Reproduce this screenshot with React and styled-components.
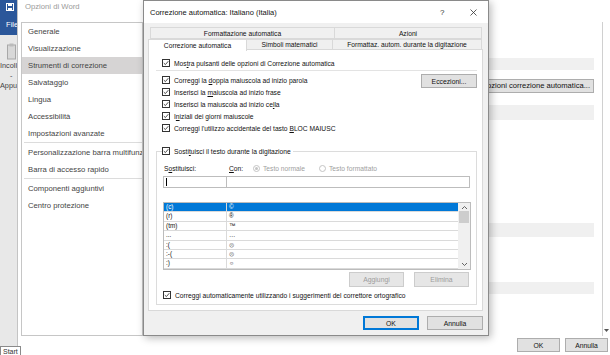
import styled, { createGlobalStyle } from "styled-components";

const GlobalStyle = createGlobalStyle`
  html, body { margin: 0; padding: 0; }
  body {
    width: 610px;
    height: 355px;
    overflow: hidden;
    background: #fff;
    font-family: "Liberation Sans", Arial, sans-serif;
  }
`;

const Page = styled.div`
  position: relative;
  display: flex;
  width: 610px;
  height: 355px;
  overflow: hidden;
  background: #fff;
`;

/* ---------- Word ribbon strip on the far left ---------- */
const Ribbon = styled.div`
  width: 17px;
  height: 346px;
  flex-shrink: 0;
  display: flex;
  flex-direction: column;
  background: #e8e8e8;
  border-right: 1px solid #c4c4c4;
  overflow: hidden;
`;
const FileTab = styled.div`
  height: 35px;
  background: #2b579a;
  color: #fff;
  display: flex;
  flex-direction: column;
  padding: 3px 0 0 6px;
  box-sizing: border-box;
  font-size: 7.6px;
  gap: 9px;
`;
const RibbonBody = styled.div`
  display: flex;
  flex-direction: column;
  align-items: flex-start;
  padding-top: 8px;
  color: #444;
  font-size: 7.3px;
  line-height: 10px;
  white-space: nowrap;
`;
const RibbonIcon = styled.div`
  padding-left: 7px;
  height: 18px;
`;

/* ---------- Opzioni di Word window ---------- */
const OptionsWindow = styled.div`
  flex: 1;
  display: flex;
  flex-direction: column;
  min-width: 0;
`;
const WinTitle = styled.div`
  height: 22px;
  padding: 2px 0 0 7px;
  box-sizing: border-box;
  font-size: 7.7px;
  line-height: 10px;
  color: #9a9a9a;
`;
const WinBody = styled.div`
  display: flex;
  height: 314px;
`;
const Nav = styled.div`
  width: 122px;
  margin-left: 3px;
  flex-shrink: 0;
  border: 1px solid #c6c6c6;
  box-sizing: border-box;
  display: flex;
  flex-direction: column;
`;
const NavItem = styled.div`
  height: 17px;
  line-height: 17px;
  padding-left: 6px;
  font-size: 7.7px;
  color: #444;
  white-space: nowrap;
  overflow: hidden;
  background: ${(p) => (p.$active ? "#d6d4d4" : "transparent")};
`;
const NavSep = styled.div`
  height: 1px;
  margin: 0 0 1px 2px;
  background: #dcdcdc;
`;
const Content = styled.div`
  flex: 1;
  display: flex;
  flex-direction: column;
  padding: 36px 8px 0 0;
`;
const Band = styled.div`
  height: ${(p) => p.$h}px;
  margin-bottom: ${(p) => p.$mb}px;
  background: #f0f0f0;
`;
const WideButton = styled.div`
  align-self: flex-end;
  height: 14px;
  width: 260px;
  box-sizing: border-box;
  border: 1px solid #adadad;
  background: #e1e1e1;
  font-size: 7.6px;
  line-height: 12px;
  text-align: right;
  padding-right: 3px;
  color: #111;
  white-space: nowrap;
  margin-bottom: ${(p) => p.$mb}px;
`;
const ScrollBar = styled.div`
  width: 8px;
  flex-shrink: 0;
  border-left: 1px solid #d0d0d0;
  display: flex;
  flex-direction: column;
  justify-content: flex-end;
  align-items: center;
  padding-bottom: 3px;
  box-sizing: border-box;
`;
const WinFooter = styled.div`
  flex: 1;
  display: flex;
  justify-content: flex-end;
  align-items: flex-start;
  gap: 5px;
  padding: 2px 2px 0 0;
`;

const Button = styled.div`
  width: ${(p) => p.$w}px;
  height: ${(p) => p.$h || 14}px;
  box-sizing: border-box;
  background: #e1e1e1;
  border: 1px solid ${(p) => (p.$default ? "#0078d7" : "#adadad")};
  ${(p) => p.$default && "box-shadow: inset 0 0 0 1px #0078d7;"}
  color: ${(p) => (p.$disabled ? "#9c9c9c" : "#111")};
  ${(p) => p.$disabled && "border-color: #cccccc; background: #e6e6e6;"}
  font-size: 6.8px;
  display: flex;
  align-items: center;
  justify-content: center;
`;

/* ---------- Correzione automatica dialog ---------- */
const Dialog = styled.div`
  position: absolute;
  left: 143px;
  top: 0;
  width: 346px;
  height: 336px;
  box-sizing: border-box;
  border: 1px solid #8a8a8a;
  background: #f0f0f0;
  box-shadow: 2px 2px 8px rgba(0, 0, 0, 0.28);
  display: flex;
  flex-direction: column;
  font-size: 6.7px;
  color: #111;
`;
const DialogTitle = styled.div`
  height: 22px;
  flex-shrink: 0;
  background: #fff;
  display: flex;
  align-items: center;
  padding: 0 11px 0 6px;
  font-size: 7.5px;
`;
const TitleText = styled.div`
  flex: 1;
`;
const TitleHelp = styled.div`
  width: 30px;
  font-size: 8px;
  color: #333;
`;
const DialogBody = styled.div`
  flex: 1;
  display: flex;
  flex-direction: column;
  padding: 4px 5px 0 4px;
`;
const TabRow = styled.div`
  display: flex;
  height: ${(p) => p.$h}px;
  padding-left: ${(p) => p.$inset || 0}px;
`;
const Tab = styled.div`
  width: ${(p) => p.$w}px;
  box-sizing: border-box;
  border: 1px solid #d9d9d9;
  border-bottom: ${(p) => (p.$active ? "none" : "1px solid #d9d9d9")};
  border-left: ${(p) => (p.$first ? "1px solid #d9d9d9" : "none")};
  background: ${(p) => (p.$active ? "#fff" : "#f0f0f0")};
  display: flex;
  align-items: center;
  justify-content: center;
  white-space: nowrap;
  position: relative;
  z-index: ${(p) => (p.$active ? 1 : 0)};
  height: ${(p) => (p.$active ? "calc(100% + 1px)" : "100%")};
`;
const Panel = styled.div`
  height: 262px;
  box-sizing: border-box;
  border: 1px solid #d9d9d9;
  margin-top: -1px;
  background: #fff;
  display: flex;
  flex-direction: column;
  padding: 7px 5px 0 7px;
`;
const CheckRow = styled.div`
  display: flex;
  align-items: center;
  height: 12px;
  gap: 4px;
  padding-left: ${(p) => p.$pad || 0}px;
  margin-top: ${(p) => p.$mt || 0}px;
  white-space: nowrap;
`;
const Divider = styled.div`
  height: 1px;
  background: #e3e3e3;
  margin: 1px 0 3px 0;
`;
const OptionBlock = styled.div`
  display: flex;
  justify-content: space-between;
  padding-left: 6px;
`;
const OptionList = styled.div`
  display: flex;
  flex-direction: column;
`;
const BoxWrap = styled.span`
  width: 8px;
  height: 8px;
  box-sizing: border-box;
  border: 1px solid #333;
  background: #fff;
  display: inline-flex;
  flex-shrink: 0;
`;
const Group = styled.fieldset`
  margin: 11px 0 0 0;
  padding: 0 6px;
  height: 160px;
  box-sizing: border-box;
  border: 1px solid #dcdcdc;
  min-width: 0;
`;
const Legend = styled.legend`
  padding: 0 2px 0 0;
  margin-left: -1px;
`;
const LabelRow = styled.div`
  display: flex;
  align-items: center;
  height: 12px;
  margin-top: 5px;
`;
const FieldLabel = styled.div`
  width: ${(p) => p.$w}px;
  padding-left: 1px;
`;
const Radio = styled.span`
  width: 7px;
  height: 7px;
  border-radius: 50%;
  border: 1px solid #c4c4c4;
  box-sizing: border-box;
  display: inline-flex;
  align-items: center;
  justify-content: center;
  margin: 0 3px 0 0;
  &::after {
    content: "";
    width: 3px;
    height: 3px;
    border-radius: 50%;
    background: ${(p) => (p.$on ? "#c4c4c4" : "transparent")};
  }
`;
const RadioLabel = styled.span`
  color: #a0a0a0;
  margin-right: 14px;
  display: inline-flex;
  align-items: center;
`;
const InputRow = styled.div`
  display: flex;
  margin-top: 2px;
`;
const Input = styled.div`
  height: 12px;
  box-sizing: border-box;
  border: 1px solid #bdbdbd;
  margin-left: ${(p) => (p.$joined ? "-1px" : 0)};
  width: ${(p) => p.$w}px;
  background: #fff;
  display: flex;
  align-items: center;
  padding-left: 2px;
`;
const Caret = styled.span`
  width: 1px;
  height: 8px;
  background: #000;
`;
const ListBox = styled.div`
  margin-top: 14px;
  width: 308px;
  height: 68px;
  box-sizing: border-box;
  border: 1px solid #bcbcbc;
  display: flex;
  overflow: hidden;
`;
const ListRows = styled.div`
  flex: 1;
  display: flex;
  flex-direction: column;
`;
const ListRow = styled.div`
  display: flex;
  height: 9.4px;
  flex-shrink: 0;
  box-sizing: border-box;
  border-bottom: 1px solid #dadada;
  background: ${(p) => (p.$sel ? "#0078d7" : "#fff")};
  color: ${(p) => (p.$sel ? "#fff" : "#111")};
  font-size: 6.4px;
  line-height: 8.4px;
`;
const Cell = styled.div`
  width: ${(p) => (p.$w ? `${p.$w}px` : "auto")};
  flex: ${(p) => (p.$w ? "none" : 1)};
  box-sizing: border-box;
  border-right: ${(p) => (p.$w ? "1px solid #dadada" : "none")};
  padding-left: 2px;
  overflow: hidden;
  font-size: ${(p) => (p.$small ? "5px" : "inherit")};
`;
const ListScroll = styled.div`
  width: 12px;
  background: #f0f0f0;
  display: flex;
  flex-direction: column;
  align-items: center;
  padding: 2px 0;
  box-sizing: border-box;
`;
const Thumb = styled.div`
  width: 10px;
  height: 12px;
  background: #cdcdcd;
  margin-top: 1px;
  margin-bottom: auto;
`;
const ActionRow = styled.div`
  display: flex;
  justify-content: flex-end;
  gap: 10px;
  width: 306px;
  margin-top: 2px;
`;
const DialogFooter = styled.div`
  display: flex;
  justify-content: flex-end;
  gap: 8px;
  padding: 5px 0 0 0;
`;

const StartTip = styled.div`
  position: absolute;
  left: 0;
  top: 346px;
  height: 10px;
  padding: 0 2px;
  border: 1px solid #8a8a8a;
  background: #fff;
  font-size: 7px;
  line-height: 9px;
  color: #333;
`;

function Check({ checked = true }) {
  return (
    <BoxWrap>
      {checked && (
        <svg width="6" height="6" viewBox="0 0 6 6">
          <path d="M0.8 3.1 L2.4 4.6 L5.3 1.2" fill="none" stroke="#222" strokeWidth="0.8" />
        </svg>
      )}
    </BoxWrap>
  );
}

function Chevron({ up }) {
  return (
    <svg width="7" height="5" viewBox="0 0 7 5">
      <path d={up ? "M1 4 L3.5 1.5 L6 4" : "M1 1 L3.5 3.5 L6 1"} fill="none" stroke="#555" strokeWidth="0.9" />
    </svg>
  );
}

const navItems = [
  "Generale",
  "Visualizzazione",
  "Strumenti di correzione",
  "Salvataggio",
  "Lingua",
  "Accessibilità",
  "Impostazioni avanzate",
  "-",
  "Personalizzazione barra multifunzione",
  "Barra di accesso rapido",
  "-",
  "Componenti aggiuntivi",
  "Centro protezione",
];

// symbols of the last rows are Wingdings faces, drawn very small in the list
const entries = [
  ["(c)", "©"],
  ["(r)", "®"],
  ["(tm)", "™"],
  ["...", "…"],
  [":(", "☹", true],
  [":-(", "☹", true],
  [":)", "☺", true],
];

export default function App() {
  return (
    <Page>
      <GlobalStyle />
      <Ribbon>
        <FileTab>
          <svg width="8" height="8" viewBox="0 0 8 8">
            <rect x="0.5" y="0.5" width="7" height="7" fill="none" stroke="#fff" />
            <rect x="2" y="0.5" width="4" height="2.5" fill="#fff" />
            <rect x="2" y="5" width="4" height="2.5" fill="#fff" />
          </svg>
          <span>File</span>
        </FileTab>
        <RibbonBody>
          <RibbonIcon>
            <svg width="9" height="17" viewBox="0 0 9 17">
              <rect x="0.5" y="2" width="8" height="14" fill="#d8d8d8" stroke="#a8a8a8" />
              <rect x="2.5" y="0.5" width="4" height="3" fill="#bbb" />
            </svg>
          </RibbonIcon>
          <span>Incolla</span>
          <span style={{ paddingLeft: 10 }}>-</span>
          <span>Appunti</span>
        </RibbonBody>
      </Ribbon>

      <OptionsWindow>
        <WinTitle>Opzioni di Word</WinTitle>
        <WinBody>
          <Nav>
            {navItems.map((item, index) =>
              item === "-" ? (
                <NavSep key={index} />
              ) : (
                <NavItem key={index} $active={item === "Strumenti di correzione"}>
                  {item}
                </NavItem>
              )
            )}
          </Nav>
          <Content>
            <Band $h={12} $mb={9} />
            <WideButton $mb={12}>Opzioni correzione automatica...</WideButton>
            <Band $h={15} $mb={103} />
            <Band $h={14} $mb={45} />
            <Band $h={12} $mb={0} />
          </Content>
          <ScrollBar>
            <svg width="5" height="4" viewBox="0 0 5 4">
              <path d="M0 0 L5 0 L2.5 3 Z" fill="#555" />
            </svg>
          </ScrollBar>
        </WinBody>
        <WinFooter>
          <Button $w={43}>OK</Button>
          <Button $w={43}>Annulla</Button>
        </WinFooter>
      </OptionsWindow>

      <Dialog>
        <DialogTitle>
          <TitleText>Correzione automatica: Italiano (Italia)</TitleText>
          <TitleHelp>?</TitleHelp>
          <svg width="7" height="7" viewBox="0 0 7 7">
            <path d="M0.5 0.5 L6.5 6.5 M6.5 0.5 L0.5 6.5" stroke="#333" strokeWidth="0.8" />
          </svg>
        </DialogTitle>
        <DialogBody>
          <TabRow $h={12} $inset={2}>
            <Tab $w={185} $first>Formattazione automatica</Tab>
            <Tab $w={147}>Azioni</Tab>
          </TabRow>
          <TabRow $h={11}>
            <Tab $w={99} $first $active>Correzione automatica</Tab>
            <Tab $w={86}>Simboli matematici</Tab>
            <Tab $w={149}>Formattaz. autom. durante la digitazione</Tab>
          </TabRow>
          <Panel>
            <CheckRow $pad={6}>
              <Check />
              <span>
                Mos<u>t</u>ra pulsanti delle opzioni di Correzione automatica
              </span>
            </CheckRow>
            <Divider />
            <OptionBlock>
              <OptionList>
                <CheckRow>
                  <Check />
                  <span>
                    Correggi la <u>d</u>oppia maiuscola ad inizio parola
                  </span>
                </CheckRow>
                <CheckRow>
                  <Check />
                  <span>
                    Inserisci la <u>m</u>aiuscola ad inizio frase
                  </span>
                </CheckRow>
                <CheckRow>
                  <Check />
                  <span>
                    Inserisci la maiuscola ad inizio ce<u>l</u>la
                  </span>
                </CheckRow>
                <CheckRow>
                  <Check />
                  <span>
                    I<u>n</u>iziali dei giorni maiuscole
                  </span>
                </CheckRow>
                <CheckRow>
                  <Check />
                  <span>
                    Correggi l'utilizzo accidentale del tasto <u>B</u>LOC MAIUSC
                  </span>
                </CheckRow>
              </OptionList>
              <Button $w={56} $h={14}>
                Eccezioni...
              </Button>
            </OptionBlock>

            <Group>
              <Legend>
                <CheckRow>
                  <Check />
                  <span>
                    Sosti<u>t</u>uisci il testo durante la digitazione
                  </span>
                </CheckRow>
              </Legend>
              <LabelRow>
                <FieldLabel $w={64}>
                  S<u>o</u>stituisci:
                </FieldLabel>
                <FieldLabel $w={24}>
                  <u>C</u>on:
                </FieldLabel>
                <RadioLabel>
                  <Radio $on />
                  Testo normale
                </RadioLabel>
                <RadioLabel>
                  <Radio />
                  Testo formattato
                </RadioLabel>
              </LabelRow>
              <InputRow>
                <Input $w={64}>
                  <Caret />
                </Input>
                <Input $w={246} $joined />
              </InputRow>
              <ListBox>
                <ListRows>
                  {entries.map(([from, to, small], index) => (
                    <ListRow key={index} $sel={index === 0}>
                      <Cell $w={63}>{from}</Cell>
                      <Cell $small={small}>{to}</Cell>
                    </ListRow>
                  ))}
                </ListRows>
                <ListScroll>
                  <Chevron up />
                  <Thumb />
                  <Chevron />
                </ListScroll>
              </ListBox>
              <ActionRow>
                <Button $w={55} $h={15} $disabled>
                  Aggiungi
                </Button>
                <Button $w={55} $h={15} $disabled>
                  Elimina
                </Button>
              </ActionRow>
              <CheckRow $mt={2}>
                <Check />
                <span>
                  Correggi automaticamente utilizzando i su<u>g</u>gerimenti del correttore ortografico
                </span>
              </CheckRow>
            </Group>
          </Panel>
          <DialogFooter>
            <Button $w={56} $default>
              OK
            </Button>
            <Button $w={56}>Annulla</Button>
          </DialogFooter>
        </DialogBody>
      </Dialog>
      <StartTip>Start</StartTip>
    </Page>
  );
}
